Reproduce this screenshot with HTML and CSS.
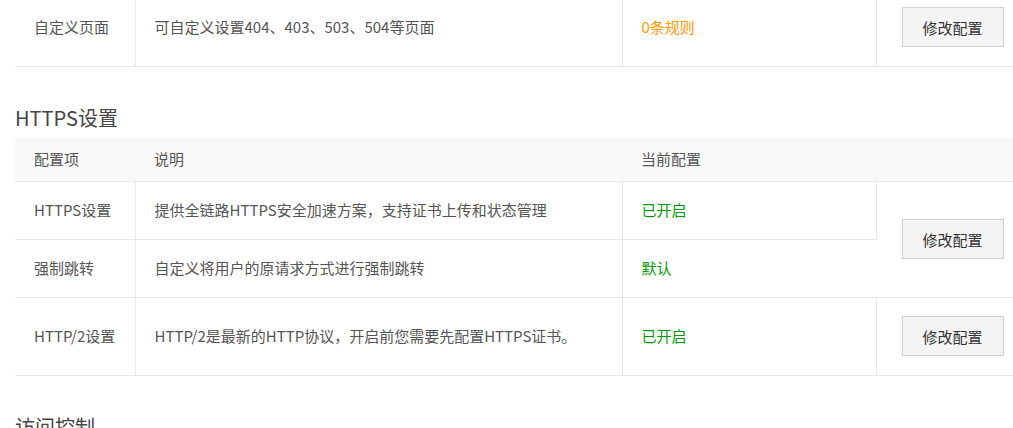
FILE: index.html
```html
<!DOCTYPE html>
<html lang="zh-CN">
<head>
  <meta charset="UTF-8" />
  <meta name="viewport" content="width=device-width, initial-scale=1.0"/>
  <title>域名配置</title>
  <link rel="stylesheet" href="styles.css">
</head>
<body>
  <div class="main">
    <!-- 上一节的最后一行 -->
    <table class="conf-table first">
      <colgroup>
        <col class="c-name"><col class="c-desc"><col class="c-value"><col>
      </colgroup>
      <tbody>
        <tr>
          <td>自定义页面</td>
          <td>可自定义设置404、403、503、504等页面</td>
          <td class="orange">0条规则</td>
          <td class="op"><button>修改配置</button></td>
        </tr>
      </tbody>
    </table>

    <h3 class="section-title">HTTPS设置</h3>
    <table class="conf-table">
      <colgroup>
        <col class="c-name"><col class="c-desc"><col class="c-value"><col>
      </colgroup>
      <thead>
        <tr>
          <th>配置项</th><th>说明</th><th>当前配置</th><th></th>
        </tr>
      </thead>
      <tbody>
        <tr>
          <td>HTTPS设置</td>
          <td>提供全链路HTTPS安全加速方案，支持证书上传和状态管理</td>
          <td class="green">已开启</td>
          <td class="op" rowspan="2"><button>修改配置</button></td>
        </tr>
        <tr>
          <td>强制跳转</td>
          <td>自定义将用户的原请求方式进行强制跳转</td>
          <td class="green">默认</td>
        </tr>
        <tr>
          <td>HTTP/2设置</td>
          <td>HTTP/2是最新的HTTP协议，开启前您需要先配置HTTPS证书。</td>
          <td class="green">已开启</td>
          <td class="op"><button>修改配置</button></td>
        </tr>
      </tbody>
    </table>

    <h3 class="section-title">访问控制</h3>
  </div>
</body>
</html>
```

FILE: styles.css
```css
body {
  margin: 0;
  font-family: "Noto Sans CJK SC", "Noto Sans", sans-serif;
  font-size: 15px;
  color: #555;
  background: #fff;
}
.main {
  padding-left: 15px;
  margin-top: -11px;
}
.conf-table {
  width: 998px;
  table-layout: fixed;
  border-collapse: collapse;
}
.c-name { width: 120px; }
.c-desc { width: 487px; }
.c-value { width: 254px; }
.conf-table th {
  background: #f9f9f9;
  font-weight: normal;
  text-align: left;
  line-height: 20px;
  padding: 12px 20px 12px 19px;
  border-bottom: 1px solid #e8e8e8;
}
.conf-table td {
  line-height: 20px;
  padding: 18px 10px 19px 19px;
  white-space: nowrap;
  border-bottom: 1px solid #e8e8e8;
  border-right: 1px solid #e8e8e8;
  vertical-align: middle;
}
.conf-table td:last-child {
  border-right: none;
}
.conf-table td.op {
  padding-left: 25px;
  padding-right: 0;
}
.orange { color: #f90; }
.green { color: #090; }
.op button {
  width: 102px;
  height: 40px;
  background: #f4f4f4;
  border: 1px solid #d0d0d0;
  font-family: inherit;
  font-size: 15px;
  color: #333;
  cursor: pointer;
}
.op button:hover {
  background: #eaeaea;
}
.section-title {
  margin: 0;
  padding: 36px 0 4px;
  font-size: 20px;
  font-weight: normal;
  line-height: 30px;
  color: #444;
}
```
